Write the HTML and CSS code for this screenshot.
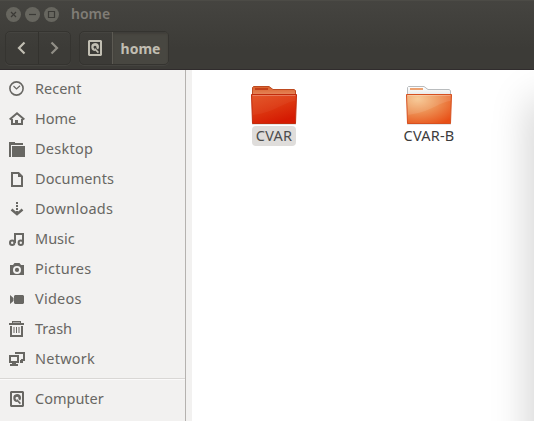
FILE: index.html
```html
<!DOCTYPE html>
<html lang="en">
<head>
<meta charset="utf-8">
<title>home</title>
<link rel="stylesheet" href="styles.css">
</head>
<body>
<svg width="0" height="0" class="defs" aria-hidden="true">
  <defs>
    <symbol id="disk" viewBox="0 0 16 16">
      <path fill-rule="evenodd" d="M2 0h12L15 1v14L14 16H2L1 15V1zM3 2v12h10V2z"/>
      <path fill-rule="evenodd" d="M8 3a4 4 0 0 1 4 4c0 1-.3 1.800-1 2.600L9.300 8A1.500 1.500 0 1 0 7 8.300L8.600 11A4 4 0 1 1 8 3z"/>
      <path d="M8 8l4 4-1.200 1.200L7.300 9.500z"/>
    </symbol>
  </defs>
</svg>
<div class="window">
  <header class="header">
    <div class="titlebar">
      <span class="control"><svg viewBox="0 0 15 15"><path d="M5 5l5 5M10 5l-5 5"/></svg></span>
      <span class="control"><svg viewBox="0 0 15 15"><path d="M4 7.500h7"/></svg></span>
      <span class="control"><svg viewBox="0 0 15 15"><path d="M4.500 4.500h6v6h-6z"/></svg></span>
      <span class="title">home</span>
    </div>
    <div class="toolbar">
      <div class="group nav">
        <button class="btn" aria-label="Back"><svg class="arrow" viewBox="0 0 16 16"><path d="M10.500 2.500L5 8l5.500 5.500"/></svg></button>
        <button class="btn dim" aria-label="Forward"><svg class="arrow" viewBox="0 0 16 16"><path d="M5.500 2.500L11 8l-5.500 5.500"/></svg></button>
      </div>
      <div class="group path">
        <button class="btn" aria-label="Computer"><svg class="icon"><use href="#disk"/></svg></button>
        <button class="btn current"><span class="crumb">home</span></button>
      </div>
    </div>
  </header>
  <div class="body">
    <nav class="sidebar">
      <div class="row recent"><svg class="icon" viewBox="0 0 16 16"><circle cx="7.500" cy="7.500" r="6.600" class="line thin"/><path class="line fine" d="M4.500 5l3 3L11 4.700"/></svg><span>Recent</span></div>
      <div class="row home"><svg class="icon" viewBox="0 0 16 16"><path class="line" d="M.700 8.600L8 2.300l7.300 6.300M3 8v5h10V8"/><path d="M6 9h3v5H6z"/></svg><span>Home</span></div>
      <div class="row desktop wide"><svg class="icon" viewBox="0 0 16 16"><path d="M0 1h6v1h8v2H2v12H0z"/><path d="M3 5h13v11H3z"/></svg><span>Desktop</span></div>
      <div class="row documents"><svg class="icon" viewBox="0 0 16 16"><path class="line" d="M3 2h6.500L13 5.500V15H3z"/><path d="M9 1.500V6h4.500z"/></svg><span>Documents</span></div>
      <div class="row downloads wide"><svg class="icon" viewBox="0 0 16 16"><path d="M7 1h2v2H7zM7 4h2v2H7zM7 7h2v2H7zM7 10h2v2H7z"/><path class="line thick" d="M2.500 8.500L8 13.200l5.500-4.700"/></svg><span>Downloads</span></div>
      <div class="row music"><svg class="icon" viewBox="0 0 16 16"><circle class="line" cx="3.200" cy="11.800" r="2.200"/><circle class="line" cx="11.800" cy="11.800" r="2.200"/><path class="line" d="M6 12V3h8v9"/></svg><span>Music</span></div>
      <div class="row pictures wide"><svg class="icon" viewBox="0 0 16 16"><path fill-rule="evenodd" d="M1 4h3l1.500-2h5L12 4h3v10H1zM8 4.900a4 4 0 1 0 0 8 4 4 0 0 0 0-8z"/><circle cx="8" cy="8.900" r="2.100"/></svg><span>Pictures</span></div>
      <div class="row videos wide"><svg class="icon" viewBox="0 0 16 16"><path d="M1 4l3.500 3v3L1 13zM6 4h8l1 1v7l-1 1H6l-1-1V5z"/></svg><span>Videos</span></div>
      <div class="row trash"><svg class="icon" viewBox="0 0 16 16"><path fill-rule="evenodd" d="M3 0h9v2h3v2H0V2h3zM4 1.400V2h7v-.6z"/><path class="line" d="M2 5v10h11V5"/><path d="M4.500 6h1v6h-1zM7 6h1v6H7zM9.500 6h1v6h-1z"/></svg><span>Trash</span></div>
      <div class="row network wide"><svg class="icon" viewBox="0 0 16 16"><path class="line" d="M7 3V2h8v7h-3"/><path d="M11 9h3v3h-3z"/><path class="line" d="M1 5h8v6H1z"/><path d="M3 12h4v1h2v2H1v-2h2z"/></svg><span>Network</span></div>
      <hr class="separator">
      <div class="row computer"><svg class="icon"><use href="#disk"/></svg><span>Computer</span></div>
    </nav>
    <main class="files">
      <div class="file selected">
        <svg class="folder" viewBox="0 0 48 42">
          <defs>
            <linearGradient id="red-front" x1="0" y1="0" x2=".5" y2="1"><stop offset="0" stop-color="#e25224"/><stop offset=".48" stop-color="#dd3b12"/><stop offset="1" stop-color="#d51a02"/></linearGradient>
            <linearGradient id="red-back" x1="0" y1="0" x2="0" y2="1"><stop offset="0" stop-color="#d9602b"/><stop offset="1" stop-color="#e99066"/></linearGradient>
          </defs>
          <path class="shade" d="M2 38h44v1.500H2z"/>
          <path fill="url(#red-back)" stroke="#bd4a20" d="M2.500 10V2.500l1-1H19l4 3h21l1.500 1V12h-43z"/>
          <path class="tab-red" d="M5 4h13"/>
          <path fill="url(#red-front)" stroke="#c12c0c" d="M1.500 9.500h45L45.500 38.500h-43z"/>
          <path class="shine faint" d="M2 10h44l-.5 6C34 17 26 27 3 30z"/>
          <path class="edge" d="M2.500 10.500h43"/>
        </svg>
        <span class="label">CVAR</span>
      </div>
      <div class="file">
        <svg class="folder" viewBox="0 0 48 42">
          <defs>
            <radialGradient id="orange-front" cx=".25" cy=".15" r="1"><stop offset="0" stop-color="#f6c58e"/><stop offset=".4" stop-color="#ee995c"/><stop offset="1" stop-color="#e84f16"/></radialGradient>
            <linearGradient id="white-back" x1="0" y1="0" x2="0" y2="1"><stop offset="0" stop-color="#fff"/><stop offset="1" stop-color="#e1e3e4"/></linearGradient>
          </defs>
          <path class="shade" d="M2 38h44v1.500H2z"/>
          <path fill="url(#white-back)" stroke="#b9bcbe" d="M2.500 10V2.500l1-1H19l4 3h21l1.500 1V12h-43z"/>
          <path class="tab-orange" d="M5 4h13"/>
          <path fill="url(#orange-front)" stroke="#d65020" d="M1.500 9.500h45L45.500 38.500h-43z"/>
          <path class="shine" d="M2 10h44l-.5 6C34 17 26 27 3 30z"/>
          <path class="edge" d="M2.500 10.500h43"/>
        </svg>
        <span class="label">CVAR-B</span>
      </div>
    </main>
  </div>
</div>
</body>
</html>
```
FILE: styles.css
```css
* { box-sizing: border-box; }
body { margin: 0; font-family: "Noto Sans", "Open Sans", sans-serif; font-size: 14.5px; overflow: hidden; }
.defs { position: absolute; }
.window { width: 534px; height: 421px; display: flex; flex-direction: column; background: #fff; }
.header { height: 70px; background: linear-gradient(#454440, #3c3b37 70%); border-top: 1px solid #4c4b46; border-bottom: 1px solid #302c2d; }
.titlebar { height: 26px; padding-left: 6px; display: flex; align-items: center; gap: 4px; }
.control { width: 15px; height: 15px; border-radius: 50%; background: #67665f; }
.control svg { display: block; width: 15px; height: 15px; fill: none; stroke: #3b3a36; stroke-width: 1.2; }
.title { margin-left: 4px; padding-left: 4px; color: #807d76; font-weight: 600; font-size: 14px; line-height: 20px; }
.toolbar { display: flex; gap: 8px; padding: 4px 5px 0; }
.group { height: 34px; display: flex; border: 1px solid #353430; border-radius: 5px; box-shadow: 0 1px 0 #454440, inset 0 1px 0 #454440; overflow: hidden; }
.nav { width: 66px; }
.path { width: 90px; }
.btn { flex: 1; border: 0; padding: 0; background: transparent; color: #c1beb2; fill: currentColor; display: flex; align-items: center; justify-content: center; font: inherit; }
.btn + .btn { border-left: 1px solid #33322e; }
.dim { color: #918e86; }
.path .btn:first-child { flex: 0 0 32px; padding-right: 2px; }
.path .current { background: #484741; border-left-color: #5c5a53; box-shadow: inset 0 2px 2px #403f3a; }
.crumb { font-size: 14px; font-weight: 700; }
.arrow { width: 16px; height: 16px; fill: none; stroke: currentColor; stroke-width: 2.2; }
.icon { width: 16px; height: 16px; flex: none; fill: currentColor; }
.line { fill: none; stroke: currentColor; stroke-width: 2; }
.line.thin { stroke-width: 1.6; }
.line.fine { stroke-width: 1.2; }
.line.thick { stroke-width: 2.5; }
.body { flex: 1; min-height: 0; display: flex; }
.sidebar { width: 186px; padding-top: 4px; background: #f2f1f0; border-right: 1px solid #b5b2af; color: #686763; }
.row { height: 30px; padding-left: 9px; display: flex; align-items: center; gap: 10px; }
.row span { line-height: 20px; padding-bottom: 2px; }
.wide span { letter-spacing: .25px; }
.documents span { letter-spacing: .1px; }
.separator { height: 2px; margin: 4px 0; border: 0; border-top: 1px solid #d9d7d5; background: #fbfafa; }
.files { flex: 1; display: flex; align-items: flex-start; gap: 55px; padding: 15px 0 0 32px; border-left: 6px solid #f2f1f0; position: relative; overflow: hidden; }
.files::after { content: ""; position: absolute; top: 32px; right: -30px; width: 30px; height: 400px; box-shadow: 0 0 40px 2px rgba(0, 0, 0, .21); }
.file { width: 100px; display: flex; flex-direction: column; align-items: center; }
.folder { width: 48px; height: 42px; }
.label { height: 20px; line-height: 18px; padding: 0 4px; border-radius: 4px; color: #3c3c3c; font-size: 14.5px; letter-spacing: .2px; margin-top: -1px; }
.selected .label { background: #dfdddb; color: #4c4c4c; }
.shade { fill: rgba(0, 0, 0, .2); }
.shine { fill: rgba(255, 255, 255, .1); }
.shine.faint { fill: rgba(255, 255, 255, .04); }
.edge { fill: none; stroke: rgba(255, 255, 255, .25); }
.tab-red { stroke: #c34019; stroke-width: 2; }
.tab-orange { stroke: #eda271; stroke-width: 2; }
```
